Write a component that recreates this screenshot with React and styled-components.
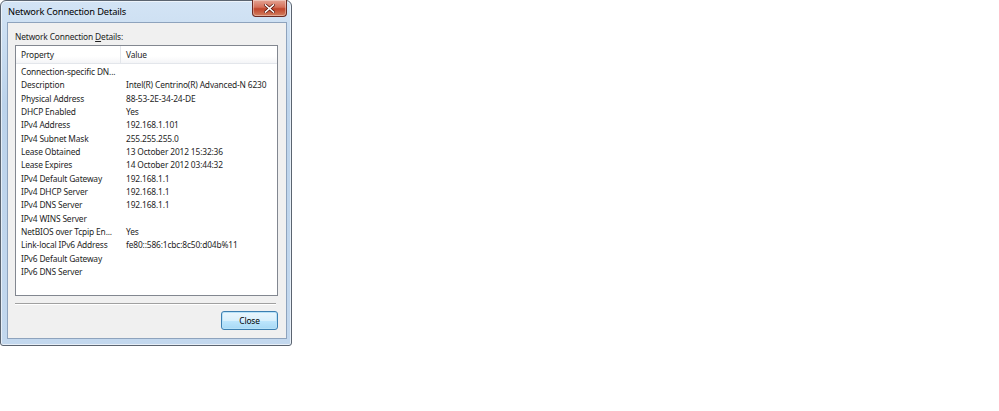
import React from "react";
import styled, { createGlobalStyle } from "styled-components";

const GlobalStyle = createGlobalStyle`
  html, body { margin: 0; padding: 0; background: #ffffff; }
  body { font-family: "Noto Sans", "Open Sans", "Liberation Sans", sans-serif; }
`;

const Window = styled.div`
  position: relative;
  width: 292px;
  height: 346px;
  box-sizing: border-box;
  border: 1px solid #5b6470;
  border-radius: 6px 6px 3px 3px;
  background: linear-gradient(180deg, #d3e4f5 0%, #bcd3eb 30%, #c3d8ee 100%);
  display: flex;
  flex-direction: column;
  padding: 0 4px 6px 6px;
  box-shadow: inset 0 0 0 1px rgba(255,255,255,0.6);
`;

const TitleBar = styled.div`
  height: 21px;
  display: flex;
  align-items: center;
  padding-left: 1px;
  font-size: 9.3px;
  color: #000;
  letter-spacing: -0.15px;
`;

const CloseX = styled.div`
  position: absolute;
  top: -1px;
  right: 4px;
  width: 35px;
  height: 17px;
  box-sizing: border-box;
  border: 1px solid #6b2a22;
  border-top: none;
  border-radius: 0 0 4px 4px;
  background: linear-gradient(180deg, #e4a494 0%, #d4705a 45%, #c0442b 55%, #d2805f 100%);
  display: flex;
  align-items: center;
  justify-content: center;
  box-shadow: inset 0 0 0 1px rgba(255,255,255,0.35);
`;

const Client = styled.div`
  flex: 1;
  background: #f0f0f0;
  border: 1px solid #8ea3bd;
  display: flex;
  flex-direction: column;
  padding: 6px 8px 0 7px;
  font-size: 8.4px;
  letter-spacing: -0.15px;
  color: #1e1e1e;
`;

const Label = styled.div`
  height: 15px;
  display: flex;
  align-items: center;
  margin-bottom: 1px;
  u { text-decoration: underline; }
`;

const ListBox = styled.div`
  height: 251px;
  box-sizing: border-box;
  border: 1px solid #828790;
  background: #ffffff;
  display: flex;
  flex-direction: column;
`;

const Header = styled.div`
  height: 17px;
  display: grid;
  grid-template-columns: 105px 1fr;
  border-bottom: 1px solid #e3e6eb;
  background: linear-gradient(180deg, #ffffff 0%, #ffffff 60%, #f4f5f7 100%);
  flex-shrink: 0;
`;

const HeaderCell = styled.div`
  display: flex;
  align-items: center;
  padding-left: 5px;
  border-right: ${(p) => (p.$divider ? "1px solid #e3e6eb" : "none")};
`;

const Rows = styled.div`
  padding-top: 1px;
  display: flex;
  flex-direction: column;
`;

const Row = styled.div`
  height: 13.33px;
  flex-shrink: 0;
  display: grid;
  grid-template-columns: 105px 1fr;
  align-items: center;
  white-space: nowrap;
`;

const Cell = styled.div`
  padding-left: 5px;
  overflow: hidden;
`;

const Separator = styled.div`
  margin: 7px 2px 0 0;
  height: 0;
  border-top: 1px solid #a0a0a0;
  border-bottom: 1px solid #ffffff;
`;

const Footer = styled.div`
  display: flex;
  justify-content: flex-end;
  padding-top: 6px;
`;

const Button = styled.button`
  width: 57px;
  height: 19px;
  box-sizing: border-box;
  border: 1px solid #3c7fb1;
  border-radius: 3px;
  background: linear-gradient(180deg, #eaf6fd 0%, #d9f0fc 50%, #bee6fd 51%, #a7d9f5 100%);
  box-shadow: inset 0 0 0 1px #b8e2f8;
  font-family: inherit;
  font-size: 8.4px;
  letter-spacing: -0.15px;
  color: #000;
  padding: 0;
`;

const rows = [
  ["Connection-specific DN...", ""],
  ["Description", "Intel(R) Centrino(R) Advanced-N 6230"],
  ["Physical Address", "88-53-2E-34-24-DE"],
  ["DHCP Enabled", "Yes"],
  ["IPv4 Address", "192.168.1.101"],
  ["IPv4 Subnet Mask", "255.255.255.0"],
  ["Lease Obtained", "13 October 2012 15:32:36"],
  ["Lease Expires", "14 October 2012 03:44:32"],
  ["IPv4 Default Gateway", "192.168.1.1"],
  ["IPv4 DHCP Server", "192.168.1.1"],
  ["IPv4 DNS Server", "192.168.1.1"],
  ["IPv4 WINS Server", ""],
  ["NetBIOS over Tcpip En...", "Yes"],
  ["Link-local IPv6 Address", "fe80::586:1cbc:8c50:d04b%11"],
  ["IPv6 Default Gateway", ""],
  ["IPv6 DNS Server", ""],
];

export default function App() {
  return (
    <>
      <GlobalStyle />
      <Window>
        <TitleBar>Network Connection Details</TitleBar>
        <CloseX>
          <svg width="11" height="9" viewBox="0 0 11 9">
            <path d="M1.5 1 L9.5 8 M9.5 1 L1.5 8" stroke="#5a1a10" strokeWidth="3" strokeLinecap="square" />
            <path d="M1.5 1 L9.5 8 M9.5 1 L1.5 8" stroke="#ffffff" strokeWidth="1.6" strokeLinecap="square" />
          </svg>
        </CloseX>
        <Client>
          <Label>
            <span>Network Connection <u>D</u>etails:</span>
          </Label>
          <ListBox>
            <Header>
              <HeaderCell $divider>Property</HeaderCell>
              <HeaderCell>Value</HeaderCell>
            </Header>
            <Rows>
              {rows.map(([k, v]) => (
                <Row key={k}>
                  <Cell>{k}</Cell>
                  <Cell>{v}</Cell>
                </Row>
              ))}
            </Rows>
          </ListBox>
          <Separator />
          <Footer>
            <Button>Close</Button>
          </Footer>
        </Client>
      </Window>
    </>
  );
}
